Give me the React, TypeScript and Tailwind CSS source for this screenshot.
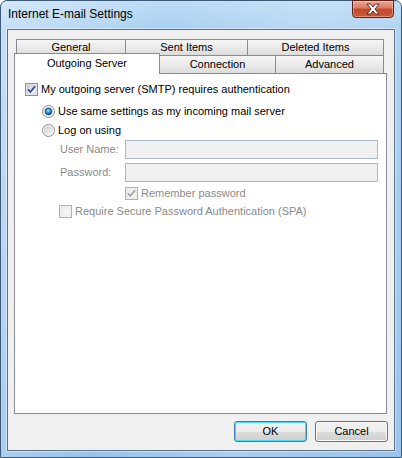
import React from 'react';

const ui = "font-['Liberation_Sans',Arial,sans-serif] text-[11px] leading-[13px]";

function CheckBox({ checked, disabled }: { checked?: boolean; disabled?: boolean }) {
  const border = disabled ? '#b1b1b1' : '#8e8f8f';
  const mark = disabled ? '#a3a3a3' : '#36478a';
  return (
    <svg width="13" height="13" viewBox="0 0 13 13" className="shrink-0">
      <defs>
        <linearGradient id={disabled ? 'cbd' : 'cbe'} x1="0" y1="0" x2="1" y2="1">
          <stop offset="0" stopColor={disabled ? '#ececec' : '#cbcfd5'} />
          <stop offset="1" stopColor={disabled ? '#fafafa' : '#f7f7f7'} />
        </linearGradient>
      </defs>
      <rect x="0.5" y="0.5" width="12" height="12" fill="#f4f4f4" stroke={border} />
      <rect x="2" y="2" width="9" height="9" fill={`url(#${disabled ? 'cbd' : 'cbe'})`} stroke={disabled ? '#dedede' : '#b7bcc4'} strokeWidth="0.6" />
      {checked && (
        <path d="M3 6.4 L5.3 9 L10 3.4" fill="none" stroke={mark} strokeWidth="1.7" strokeLinejoin="round" />
      )}
    </svg>
  );
}

function Radio({ checked }: { checked?: boolean }) {
  return (
    <svg width="13" height="13" viewBox="0 0 13 13" className="shrink-0">
      <defs>
        <linearGradient id="rdo" x1="0" y1="0" x2="1" y2="1">
          <stop offset="0" stopColor="#c8ccd2" />
          <stop offset="1" stopColor="#f8f8f8" />
        </linearGradient>
        <radialGradient id="dot" cx="0.45" cy="0.4" r="0.6">
          <stop offset="0" stopColor="#b9f0ff" />
          <stop offset="0.45" stopColor="#2f9ad8" />
          <stop offset="1" stopColor="#0d3f73" />
        </radialGradient>
      </defs>
      <circle cx="6.5" cy="6.5" r="6" fill="#f5f5f5" stroke="#8d8f92" />
      <circle cx="6.5" cy="6.5" r="4.6" fill="url(#rdo)" />
      {checked && <circle cx="6.5" cy="6.5" r="3.4" fill="url(#dot)" stroke="#1b4670" strokeWidth="0.6" />}
    </svg>
  );
}

function Tab({ label, w, first }: { label: string; w: string; first?: boolean }) {
  return (
    <div
      className={`${w} ${first ? '' : '-ml-px'} h-full flex items-center justify-center border border-b-0 border-[#898c95] bg-[linear-gradient(180deg,#f6f6f6,#e9e9e9_55%,#dcdcdc)] text-black`}
    >
      {label}
    </div>
  );
}

function TextBox() {
  return <div className="w-[253px] h-[19px] border border-[#adbacb] bg-[#f0f0f0]" />;
}

function Button({ label, isDefault }: { label: string; isDefault?: boolean }) {
  return (
    <button
      className={`w-[73px] h-[21px] rounded-[3px] border ${
        isDefault ? 'border-[#3c7fb1] shadow-[inset_0_0_0_1px_#48d8fb]' : 'border-[#707070] shadow-[inset_0_0_0_1px_#fbfbfb]'
      } bg-[linear-gradient(180deg,#f2f2f2,#ebebeb_50%,#dddddd_50%,#cfcfcf)] text-black flex items-center justify-center`}
    >
      {label}
    </button>
  );
}

export default function App() {
  return (
    <div className={`${ui} w-[402px] h-[458px] bg-white`}>
      <div className="w-[402px] h-[458px] flex flex-col rounded-t-[7px] border border-[#3d5a78] px-[6px] pb-[6px] bg-[linear-gradient(100deg,rgba(255,255,255,0.35)_0%,rgba(255,255,255,0)_35%,rgba(255,255,255,0.18)_65%,rgba(255,255,255,0)_100%),linear-gradient(180deg,#bcdbf5_0%,#a8cff0_30px,#98c4ec_100%)]">
        {/* title bar */}
        <div className="h-[28px] flex items-start justify-between shrink-0">
          <div className="pt-[6px] pl-[1px] font-['Liberation_Sans',Arial,sans-serif] text-[12px] leading-[15px] text-black">
            Internet E-mail Settings
          </div>
          <div className="w-[42px] h-[18px] -mt-px mr-px rounded-b-[4px] border border-[#5e2015] bg-[linear-gradient(180deg,#eaa897_0%,#d9785f_45%,#c4482e_50%,#c85a3c_100%)] shadow-[inset_0_0_0_1px_rgba(255,210,200,0.45)] flex items-center justify-center">
            <svg width="14" height="12" viewBox="0 0 14 12">
              <polygon
                points="1,1 4.6,1 7,4 9.4,1 13,1 9,6 13,11 9.4,11 7,8 4.6,11 1,11 5,6"
                fill="#ffffff"
                stroke="#4a1c14"
                strokeWidth="0.9"
                strokeLinejoin="round"
              />
            </svg>
          </div>
        </div>

        {/* client area */}
        <div className="flex-1 flex flex-col border border-[#5b6f88] bg-[#f0f0f0] shadow-[0_0_0_1px_rgba(255,255,255,0.45)]">
          <div className="mt-[9px] ml-[8px] flex flex-col">
            <div className="flex h-[16px]">
              <Tab label="General" w="w-[110px]" first />
              <Tab label="Sent Items" w="w-[123px]" />
              <Tab label="Deleted Items" w="w-[137px]" />
            </div>
            <div className="flex h-[18px] items-end">
              <div className="relative z-10 w-[146px] h-[21px] -ml-[2px] -mb-px border border-b-0 border-[#898c95] bg-white flex items-center justify-center pb-[1px]">
                Outgoing Server
              </div>
              <div className="flex h-[18px]">
                <Tab label="Connection" w="w-[117px]" />
                <Tab label="Advanced" w="w-[109px]" />
              </div>
            </div>
            <div className="-ml-[2px] w-[373px] h-[341px] border border-[#898c95] bg-white text-black flex flex-col pl-[10px] pt-[9px]">
              <div className="flex items-center gap-[3px]">
                <CheckBox checked />
                <span>My outgoing server (SMTP) requires authentication</span>
              </div>
              <div className="flex items-center gap-[3px] mt-[9px] ml-[17px]">
                <Radio checked />
                <span>Use same settings as my incoming mail server</span>
              </div>
              <div className="flex items-center gap-[3px] mt-[6px] ml-[17px]">
                <Radio />
                <span>Log on using</span>
              </div>
              <div className="flex items-center mt-[3px] ml-[35px] text-[#8a8a8a]">
                <span className="w-[65px]">User Name:</span>
                <TextBox />
              </div>
              <div className="flex items-center mt-[4px] ml-[35px] text-[#8a8a8a]">
                <span className="w-[65px]">Password:</span>
                <TextBox />
              </div>
              <div className="flex items-center gap-[3px] mt-[5px] ml-[100px] text-[#8a8a8a]">
                <CheckBox checked disabled />
                <span>Remember password</span>
              </div>
              <div className="flex items-center gap-[3px] mt-[5px] ml-[34px] text-[#8a8a8a]">
                <CheckBox disabled />
                <span>Require Secure Password Authentication (SPA)</span>
              </div>
            </div>
          </div>

          <div className="flex justify-end gap-[8px] mt-[7px] pr-[6px]">
            <Button label="OK" isDefault />
            <Button label="Cancel" />
          </div>
        </div>
      </div>
    </div>
  );
}
